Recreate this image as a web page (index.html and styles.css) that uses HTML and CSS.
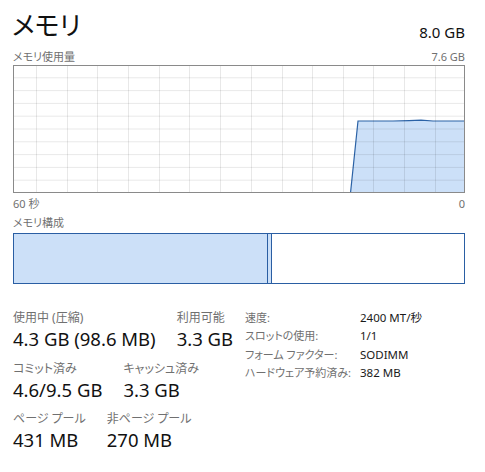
FILE: index.html
```html
<!DOCTYPE html>
<html lang="ja">
<head>
<meta charset="utf-8">
<title>メモリ</title>
<link rel="stylesheet" href="styles.css">
</head>
<body>
<div class="page">
  <div class="head">
    <h1 class="title">メモリ</h1>
    <span class="total">8.0 GB</span>
  </div>
  <div class="axis axis-top"><span>メモリ使用量</span><span>7.6 GB</span></div>
  <svg class="chart" width="452" height="128" viewBox="0 0 452 128">
    <polygon class="area" points="337.5,128 345,56 380,56 396,55.6 408,55.2 420,56 451,56 451,128"/>
    <polyline class="area-line" points="337.5,128 345,56 380,56 396,55.6 408,55.2 420,56 451,56"/>
    <g class="grid">
      <line x1="23.5" y1="0" x2="23.5" y2="128"/>
      <line x1="54.5" y1="0" x2="54.5" y2="128"/>
      <line x1="84.5" y1="0" x2="84.5" y2="128"/>
      <line x1="115.5" y1="0" x2="115.5" y2="128"/>
      <line x1="146.5" y1="0" x2="146.5" y2="128"/>
      <line x1="176.5" y1="0" x2="176.5" y2="128"/>
      <line x1="207.5" y1="0" x2="207.5" y2="128"/>
      <line x1="238.5" y1="0" x2="238.5" y2="128"/>
      <line x1="269.5" y1="0" x2="269.5" y2="128"/>
      <line x1="299.5" y1="0" x2="299.5" y2="128"/>
      <line x1="330.5" y1="0" x2="330.5" y2="128"/>
      <line x1="360.5" y1="0" x2="360.5" y2="128"/>
      <line x1="391.5" y1="0" x2="391.5" y2="128"/>
      <line x1="422.5" y1="0" x2="422.5" y2="128"/>
      <line x1="0" y1="12.8" x2="452" y2="12.8"/>
      <line x1="0" y1="25.6" x2="452" y2="25.6"/>
      <line x1="0" y1="38.4" x2="452" y2="38.4"/>
      <line x1="0" y1="51.2" x2="452" y2="51.2"/>
      <line x1="0" y1="64" x2="452" y2="64"/>
      <line x1="0" y1="76.8" x2="452" y2="76.8"/>
      <line x1="0" y1="89.6" x2="452" y2="89.6"/>
      <line x1="0" y1="102.4" x2="452" y2="102.4"/>
      <line x1="0" y1="115.2" x2="452" y2="115.2"/>
    </g>
    <rect class="frame" x="0.5" y="0.5" width="451" height="127"/>
  </svg>
  <div class="axis axis-bottom"><span>60 秒</span><span>0</span></div>
  <div class="axis comp-label">メモリ構成</div>
  <div class="comp">
    <div class="seg seg-use"></div>
    <div class="seg seg-mod"></div>
    <div class="seg seg-free"></div>
  </div>
  <div class="stats">
    <div class="stats-left">
      <div class="srow">
        <div class="stat"><div class="slabel">使用中 (圧縮)</div><div class="sval">4.3 GB (98.6 MB)</div></div>
        <div class="stat"><div class="slabel">利用可能</div><div class="sval">3.3 GB</div></div>
      </div>
      <div class="srow">
        <div class="stat"><div class="slabel">コミット済み</div><div class="sval">4.6/9.5 GB</div></div>
        <div class="stat"><div class="slabel">キャッシュ済み</div><div class="sval">3.3 GB</div></div>
      </div>
      <div class="srow">
        <div class="stat"><div class="slabel">ページ プール</div><div class="sval">431 MB</div></div>
        <div class="stat"><div class="slabel">非ページ プール</div><div class="sval">270 MB</div></div>
      </div>
    </div>
    <div class="stats-right">
      <div class="prow"><span class="pkey">速度:</span><span class="pval">2400 MT/秒</span></div>
      <div class="prow"><span class="pkey">スロットの使用:</span><span class="pval">1/1</span></div>
      <div class="prow"><span class="pkey">フォーム ファクター:</span><span class="pval">SODIMM</span></div>
      <div class="prow"><span class="pkey">ハードウェア予約済み:</span><span class="pval">382 MB</span></div>
    </div>
  </div>
</div>
</body>
</html>
```

FILE: styles.css
```css
html, body {
  margin: 0;
  padding: 0;
  background: #ffffff;
}

body {
  font-family: "Noto Sans", "Noto Sans CJK JP", sans-serif;
  font-feature-settings: "palt";
  color: #1a1a1a;
}

.page {
  width: 452px;
  padding: 0 20px 0 13px;
}

.head {
  display: flex;
  justify-content: space-between;
  align-items: flex-end;
  height: 40px;
  padding-top: 10px;
  box-sizing: border-box;
}

.title {
  margin: 0;
  margin-left: -1px;
  font-size: 26px;
  font-weight: normal;
  line-height: 30px;
  color: #111111;
}

.total {
  font-size: 15px;
  line-height: 15px;
  color: #111111;
}

.axis {
  display: flex;
  justify-content: space-between;
  font-size: 11px;
  line-height: 13px;
  color: #707070;
}

.axis-top {
  margin-top: 10px;
  margin-bottom: 2px;
}

.axis-bottom {
  margin-top: 4px;
}

.comp-label {
  margin-top: 6px;
}

.chart {
  display: block;
}

.area {
  fill: #cce0f8;
}

.area-line {
  fill: none;
  stroke: #2b62a6;
  stroke-width: 1.2;
}

.grid line {
  stroke: rgba(0, 0, 0, 0.09);
  stroke-width: 1;
}

.frame {
  fill: none;
  stroke: #8a8a8a;
  stroke-width: 1;
}

.comp {
  display: flex;
  height: 51px;
  margin-top: 4px;
}

.seg {
  box-sizing: border-box;
}

.seg-use {
  width: 255px;
  background: #cce0f8;
  border: 1px solid #2a5ea3;
}

.seg-mod {
  width: 3px;
  background: #cce0f8;
  border-top: 1px solid #2a5ea3;
  border-bottom: 1px solid #2a5ea3;
}

.seg-free {
  flex: 1;
  background: #ffffff;
  border: 1px solid #2a5ea3;
}

.stats {
  display: flex;
  margin-top: 26px;
}

.stats-left {
  width: 232px;
  display: flex;
  flex-direction: column;
  gap: 8.5px;
}

.srow {
  display: flex;
  gap: 21px;
}

.slabel {
  font-size: 12px;
  line-height: 16px;
  color: #707070;
  white-space: nowrap;
}

.sval {
  font-size: 18.5px;
  line-height: 26px;
  color: #111111;
  white-space: nowrap;
}

.stats-right {
  margin-top: -1px;
}

.prow {
  display: flex;
  align-items: baseline;
  font-size: 11.5px;
  line-height: 18.3px;
}

.pkey {
  flex-shrink: 0;
  width: 115px;
  font-size: 11px;
  color: #707070;
  white-space: nowrap;
}

.pval {
  color: #1a1a1a;
  white-space: nowrap;
}
```
